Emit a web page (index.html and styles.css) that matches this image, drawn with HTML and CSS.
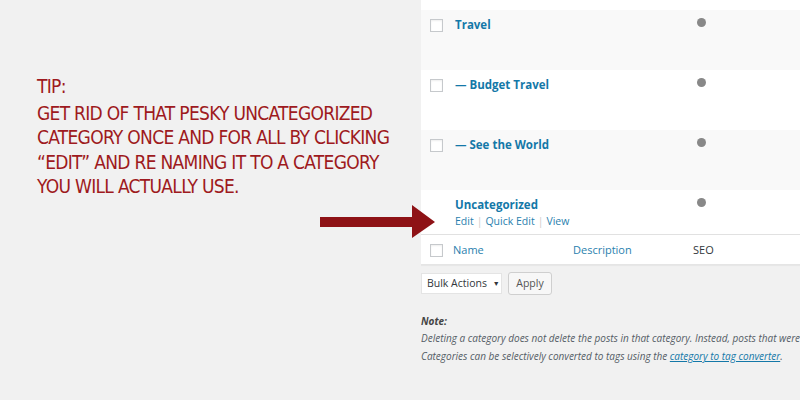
FILE: index.html
```html
<!DOCTYPE html>
<html>
<head>
<meta charset="utf-8">
<link rel="stylesheet" href="styles.css">
</head>
<body>
<div class="page">
  <section class="tip">
    <p class="tip-title">TIP:</p>
    <p class="tip-body">GET RID OF THAT PESKY UNCATEGORIZED<br>CATEGORY ONCE AND FOR ALL BY CLICKING<br>“EDIT” AND RE NAMING IT TO A CATEGORY<br>YOU WILL ACTUALLY USE.</p>
    <svg class="arrow" width="116" height="34" viewBox="0 0 116 34">
      <path d="M0 12 H92 V0 L115 17 L92 33 V22 H0 Z" fill="#8e1216"/>
    </svg>
  </section>
  <section class="admin">
    <div class="table">
      <div class="row white stub"></div>
      <div class="row alt">
        <span class="cb"></span>
        <a class="name">Travel</a>
        <span class="desc"></span>
        <span class="seo"><i class="dot"></i></span>
      </div>
      <div class="row white">
        <span class="cb"></span>
        <a class="name">— Budget Travel</a>
        <span class="desc"></span>
        <span class="seo"><i class="dot"></i></span>
      </div>
      <div class="row alt">
        <span class="cb"></span>
        <a class="name">— See the World</a>
        <span class="desc"></span>
        <span class="seo"><i class="dot"></i></span>
      </div>
      <div class="row white short">
        <span class="nocb"></span>
        <div class="namecell">
          <a class="name">Uncategorized</a>
          <div class="actions"><a>Edit</a><span class="sep">|</span><a>Quick Edit</a><span class="sep">|</span><a>View</a></div>
        </div>
        <span class="desc"></span>
        <span class="seo"><i class="dot"></i></span>
      </div>
      <div class="row head">
        <span class="cb"></span>
        <a class="hname">Name</a>
        <a class="hdesc">Description</a>
        <span class="hseo">SEO</span>
      </div>
    </div>
    <div class="bulk">
      <div class="select">Bulk Actions <span class="caret">▼</span></div>
      <div class="button">Apply</div>
    </div>
    <div class="note">
      <p class="note-title">Note:</p>
      <p>Deleting a category does not delete the posts in that category. Instead, posts that were only assigned to the deleted category are set to the category Uncategorized.</p>
      <p>Categories can be selectively converted to tags using the <a>category to tag converter</a>.</p>
    </div>
  </section>
</div>
</body>
</html>
```

FILE: styles.css
```css
html, body {
  margin: 0;
  padding: 0;
  background: #f1f1f1;
  overflow: hidden;
}
.page {
  display: flex;
  width: 800px;
  height: 400px;
  overflow: hidden;
}
.tip {
  position: relative;
  width: 421px;
  flex: none;
  padding: 75px 0 0 37px;
  box-sizing: border-box;
  font-family: "DejaVu Sans Condensed", "Liberation Sans Narrow", sans-serif;
  color: #9e1a20;
  font-size: 19px;
  letter-spacing: -0.7px;
}
.tip p {
  margin: 0;
}
.tip-title {
  line-height: 22px;
  margin-bottom: 4px !important;
}
.tip-body {
  line-height: 24.3px;
  white-space: nowrap;
}
.arrow {
  position: absolute;
  left: 320px;
  top: 205px;
}
.admin {
  flex: none;
  width: 379px;
  overflow: hidden;
  font-family: "Open Sans", sans-serif;
  font-size: 11px;
}
.table {
  width: 400px;
  background: #fff;
  box-shadow: 0 1px 1px rgba(0,0,0,0.04);
  border-bottom: 1px solid #e5e5e5;
}
.row {
  display: grid;
  grid-template-columns: 34px 118px 120px 1fr;
  height: 60px;
  box-sizing: border-box;
  padding-top: 8px;
}
.row.stub {
  height: 10px;
  padding: 0;
}
.white { background: #fff; }
.alt { background: #f9f9f9; }
.row.short { height: 44px; padding-top: 8px; }
.cb {
  width: 11px;
  height: 11px;
  margin: 1px 0 0 9px;
  border: 1px solid #c6c9cc;
  background: #fff;
  box-shadow: inset 0 1px 2px rgba(0,0,0,0.07);
}
.name {
  color: #1478a8;
  font-weight: 700;
  font-size: 11.5px;
  line-height: 14px;
  white-space: nowrap;
}
.namecell { display: flex; flex-direction: column; gap: 2px; }
.actions {
  color: #2a7fae;
  font-size: 10.5px;
  line-height: 14px;
  white-space: nowrap;
}
.actions .sep {
  color: #ccc;
  margin: 0 3px;
}
.dot {
  display: block;
  width: 9px;
  height: 9px;
  border-radius: 50%;
  background: #888;
  margin: 0 0 0 4px;
}
.row.head {
  height: 30px;
  padding-top: 8px;
  border-top: 1px solid #e1e1e1;
  background: #fff;
}
.hname, .hdesc {
  color: #2a7fae;
  font-size: 11px;
  line-height: 13px;
}
.hname { margin-left: -2px; }
.hseo {
  color: #32373c;
  font-size: 11px;
  line-height: 13px;
}
.bulk {
  display: flex;
  gap: 6px;
  margin-top: 8px;
}
.select {
  width: 81px;
  height: 21px;
  box-sizing: border-box;
  background: #fff;
  border: 1px solid #e4e4e4;
  color: #32373c;
  font-size: 10.5px;
  line-height: 19px;
  padding-left: 5px;
  white-space: nowrap;
}
.caret { font-size: 7px; margin-left: 3px; vertical-align: 1px; }
.button {
  width: 44px;
  height: 23px;
  margin-top: -1px;
  box-sizing: border-box;
  background: #f7f7f7;
  border: 1px solid #cfcfcf;
  border-radius: 3px;
  color: #555;
  font-size: 10.5px;
  line-height: 21px;
  text-align: center;
}
.note {
  margin-top: 18px;
  font-style: italic;
  color: #555d66;
  font-size: 10px;
  white-space: nowrap;
}
.note p {
  margin: 0;
  line-height: 18px;
}
.note .note-title {
  font-weight: 700;
  color: #444;
  line-height: 16px;
}
.note a {
  color: #1478a8;
  text-decoration: underline;
}
```
